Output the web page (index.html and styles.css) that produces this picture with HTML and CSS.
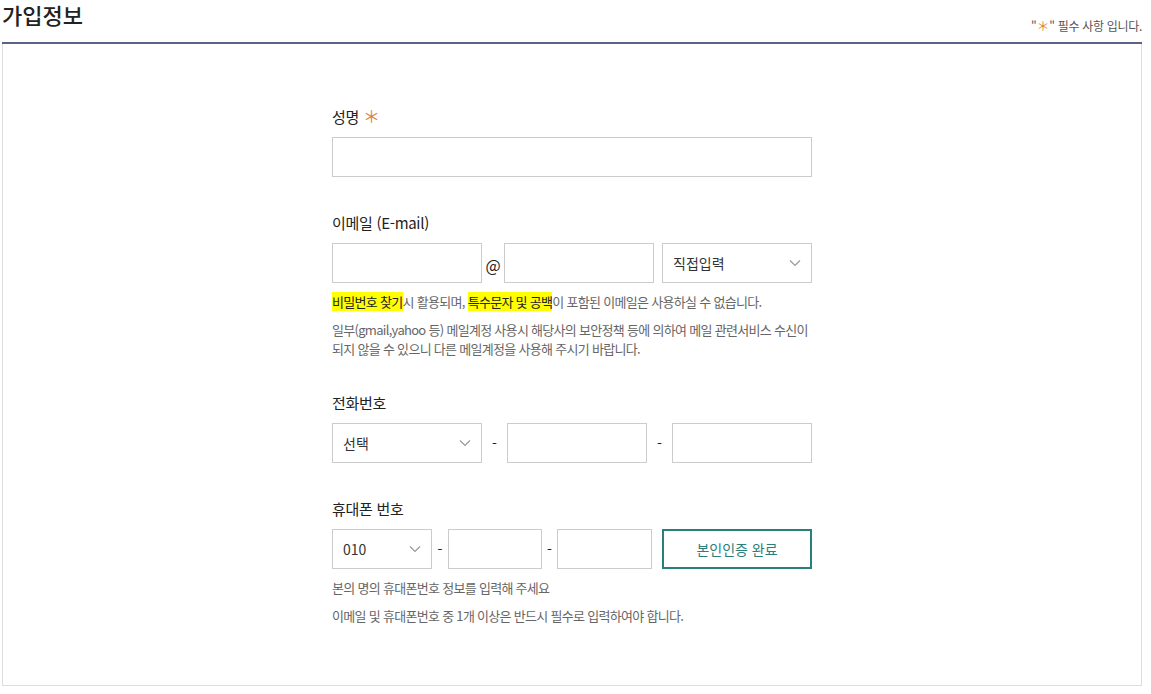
FILE: index.html
```html
<!DOCTYPE html>
<html lang="ko">
<head>
  <meta charset="UTF-8">
  <title>가입정보</title>
  <link rel="stylesheet" href="styles.css">
</head>
<body>
  <div class="page">
    <div class="page-head">
      <h2 class="page-title">가입정보</h2>
      <span class="page-note">"<span class="req">＊</span>" 필수 사항 입니다.</span>
    </div>
    <div class="box">
      <div class="form">
        <div class="field">
          <div class="label">성명 <span class="req">＊</span></div>
          <div class="input full"></div>
        </div>

        <div class="field">
          <div class="label">이메일 (E-mail)</div>
          <div class="row">
            <div class="input w150"></div>
            <span class="sep at">@</span>
            <div class="input w150"></div>
            <div class="select w150 ml8">
              <span>직접입력</span>
              <svg width="12" height="8" viewBox="0 0 12 8"><path d="M1 1.5 6 6.5 11 1.5" fill="none" stroke="#999" stroke-width="1.2"/></svg>
            </div>
          </div>
          <p class="note"><mark>비밀번호 찾기</mark>시 활용되며, <mark>특수문자 및 공백</mark>이 포함된 이메일은 사용하실 수 없습니다.</p>
          <p class="note">일부(gmail,yahoo 등) 메일계정 사용시 해당사의 보안정책 등에 의하여 메일 관련서비스 수신이<br>되지 않을 수 있으니 다른 메일계정을 사용해 주시기 바랍니다.</p>
        </div>

        <div class="field after-note">
          <div class="label">전화번호</div>
          <div class="row">
            <div class="select w150">
              <span>선택</span>
              <svg width="12" height="8" viewBox="0 0 12 8"><path d="M1 1.5 6 6.5 11 1.5" fill="none" stroke="#999" stroke-width="1.2"/></svg>
            </div>
            <span class="sep w25">-</span>
            <div class="input w140"></div>
            <span class="sep w25">-</span>
            <div class="input w140"></div>
          </div>
        </div>

        <div class="field">
          <div class="label">휴대폰 번호</div>
          <div class="row">
            <div class="select w100">
              <span>010</span>
              <svg width="12" height="8" viewBox="0 0 12 8"><path d="M1 1.5 6 6.5 11 1.5" fill="none" stroke="#999" stroke-width="1.2"/></svg>
            </div>
            <span class="sep w16">-</span>
            <div class="input w94"></div>
            <span class="sep w15">-</span>
            <div class="input w95"></div>
            <div class="btn-auth">본인인증 완료</div>
          </div>
          <p class="note">본의 명의 휴대폰번호 정보를 입력해 주세요</p>
          <p class="note">이메일 및 휴대폰번호 중 1개 이상은 반드시 필수로 입력하여야 합니다.</p>
        </div>
      </div>
    </div>
  </div>
</body>
</html>
```

FILE: styles.css
```css
/* Base */
html, body {
  margin: 0;
  padding: 0;
  background: #fff;
  color: #222;
  font-family: "Noto Sans CJK KR", "Noto Sans", sans-serif;
}

/* Page frame */
.page {
  width: 1140px;
  margin-left: 2px;
}
.page-head {
  display: flex;
  justify-content: space-between;
  align-items: flex-end;
  height: 42px;
  border-bottom: 2px solid #5a6286;
}
.page-title {
  margin: 0;
  align-self: flex-start;
  font-size: 22px;
  font-weight: 500;
  line-height: 28px;
  color: #222;
}
.page-note {
  font-size: 12px;
  color: #555;
  line-height: 16px;
  margin-bottom: 8px;
  letter-spacing: -0.3px;
}
.page-note .req {
  font-size: 13px;
}
.box {
  height: 641px;
  border: 1px solid #ddd;
  border-top: none;
}

/* Form */
.form {
  width: 480px;
  margin: 0 auto;
  padding-top: 61px;
}
.field + .field {
  margin-top: 34px;
}
.field.after-note {
  margin-top: 33px;
}
.label {
  height: 24px;
  font-size: 15px;
  line-height: 24px;
  color: #222;
  margin-bottom: 8px;
  letter-spacing: -0.3px;
}
.req {
  color: #e0883a;
}
.label .req {
  font-size: 17px;
  line-height: 20px;
}
.row {
  display: flex;
  align-items: center;
}
.input, .select {
  box-sizing: border-box;
  height: 40px;
  border: 1px solid #ccc;
  background: #fff;
}
.full { width: 480px; }
.w150 { width: 150px; }
.w140 { width: 140px; }
.w100 { width: 100px; }
.w95 { width: 95px; }
.w94 { width: 94px; }
.ml8 { margin-left: 8px; }
.select {
  display: flex;
  align-items: center;
  justify-content: space-between;
  padding: 0 10px 0 10px;
  font-size: 14px;
  color: #333;
}
.sep {
  text-align: center;
  font-size: 14px;
  color: #222;
}
.sep.at {
  width: 22px;
  font-size: 16px;
  margin-top: 4px;
}
.w25 { width: 25px; }
.w16 { width: 16px; }
.w15 { width: 15px; }
.btn-auth {
  box-sizing: border-box;
  width: 150px;
  height: 40px;
  margin-left: 10px;
  border: 2px solid #2b7f7a;
  color: #2b7f7a;
  font-size: 14px;
  display: flex;
  align-items: center;
  justify-content: center;
}
.note {
  margin: 9px 0 0;
  font-size: 13px;
  line-height: 19px;
  color: #666;
  letter-spacing: -0.7px;
}
.note mark {
  background: #ffff00;
  color: #222;
}
```
